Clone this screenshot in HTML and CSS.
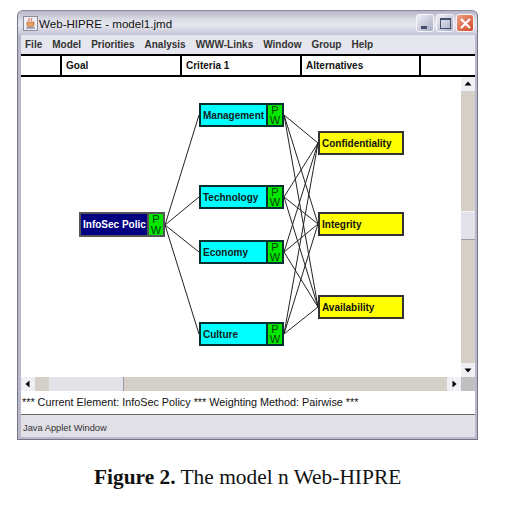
FILE: index.html
```html
<!DOCTYPE html>
<html lang="en">
<head>
  <meta charset="UTF-8">
  <title>Web-HIPRE - model1.jmd</title>
  <link rel="stylesheet" href="styles.css">
</head>
<body>
  <div class="window">
    <div class="titlebar">
      <svg class="appicon" width="15" height="15" viewBox="0 0 15 15">
        <rect x="0.5" y="0.5" width="14" height="14" fill="#eeeef4" stroke="#8a8a9a"/>
        <path d="M6 2c1 1-1 2 0 3M8.5 2c1 1-1 2 0 3" fill="none" stroke="#d05020"/>
        <path d="M4 6h7v3c0 1-1 2-2 2H6c-1 0-2-1-2-2z" fill="#e8a060" stroke="#b06030" stroke-width="0.6"/>
        <path d="M3 12h9" stroke="#5070a0"/>
      </svg>
      <span class="title">Web-HIPRE - model1.jmd</span>
      <div class="winbtns">
        <div class="winbtn"><svg width="17" height="17" viewBox="0 0 17 17"><rect x="4" y="11" width="6" height="3" fill="#44506a"/></svg></div>
        <div class="winbtn"><svg width="17" height="17" viewBox="0 0 17 17"><rect x="3.5" y="3.5" width="10" height="10" fill="none" stroke="#44506a"/><rect x="3" y="3" width="11" height="2" fill="#44506a"/></svg></div>
        <div class="winbtn closebtn"><svg width="17" height="17" viewBox="0 0 17 17"><path d="M4 4l9 9M13 4l-9 9" stroke="#fff" stroke-width="2.2"/></svg></div>
      </div>
    </div>

    <div class="menubar">
      <span>File</span>
      <span>Model</span>
      <span>Priorities</span>
      <span>Analysis</span>
      <span>WWW-Links</span>
      <span>Window</span>
      <span>Group</span>
      <span>Help</span>
    </div>

    <div class="levels">
      <div class="level"></div>
      <div class="level">Goal</div>
      <div class="level">Criteria 1</div>
      <div class="level">Alternatives</div>
      <div class="level"></div>
    </div>

    <div class="middle">
      <div class="canvas">
        <svg class="edges" width="440" height="300" viewBox="0 0 440 300">
          <g stroke="#222" stroke-width="1" fill="none">
            <path d="M144 148L178 38M144 148L178 120M144 148L178 175M144 148L178 257"/>
            <path d="M263 38L297 66M263 38L297 147M263 38L297 230"/>
            <path d="M263 120L297 66M263 120L297 147M263 120L297 230"/>
            <path d="M263 175L297 66M263 175L297 147M263 175L297 230"/>
            <path d="M263 257L297 66M263 257L297 147M263 257L297 230"/>
          </g>
        </svg>

        <div class="node root"><span class="label">InfoSec Polic</span><div class="pw">P<br>W</div></div>
        <div class="node crit mgmt"><span class="label">Management</span><div class="pw">P<br>W</div></div>
        <div class="node crit tech"><span class="label">Technology</span><div class="pw">P<br>W</div></div>
        <div class="node crit econ"><span class="label">Economy</span><div class="pw">P<br>W</div></div>
        <div class="node crit cult"><span class="label">Culture</span><div class="pw">P<br>W</div></div>
        <div class="node alt conf"><span class="label">Confidentiality</span></div>
        <div class="node alt integ"><span class="label">Integrity</span></div>
        <div class="node alt avail"><span class="label">Availability</span></div>
      </div>

      <div class="vscroll">
        <div class="sbtn"><svg width="14" height="14" viewBox="0 0 14 14"><path d="M7 4.5l3.5 4h-7z" fill="#000"/></svg></div>
        <div class="vtrack-top"></div>
        <div class="vthumb"></div>
        <div class="track"></div>
        <div class="sbtn"><svg width="14" height="14" viewBox="0 0 14 14"><path d="M7 9.5l3.5-4h-7z" fill="#000"/></svg></div>
      </div>
    </div>

    <div class="hrow">
      <div class="hscroll">
        <div class="sbtn"><svg width="14" height="14" viewBox="0 0 14 14"><path d="M4.5 7l4-3.5v7z" fill="#000"/></svg></div>
        <div class="htrack-left"></div>
        <div class="hthumb"></div>
        <div class="track"></div>
        <div class="sbtn"><svg width="14" height="14" viewBox="0 0 14 14"><path d="M9.5 7l-4-3.5v7z" fill="#000"/></svg></div>
      </div>
      <div class="corner"></div>
    </div>

    <div class="status">*** Current Element: InfoSec Policy *** Weighting Method: Pairwise ***</div>
    <div class="appletbar">Java Applet Window</div>
  </div>

  <p class="caption"><b>Figure 2.</b> The model n Web-HIPRE</p>
</body>
</html>
```

FILE: styles.css
```css
body {
  margin: 0;
  background: white;
  font-family: "Liberation Sans", Arial, sans-serif;
}

.window {
  margin: 10px 0 0 17px;
  width: 461px;
  height: 430px;
  box-sizing: border-box;
  display: flex;
  flex-direction: column;
  border: 1px solid #76768a;
  border-top-color: #8a8a9c;
  border-radius: 6px 6px 0 0;
  background: #b9b9cb;
  padding: 0 2px 2px 3px;
  overflow: hidden;
}

.titlebar {
  height: 24px;
  flex: none;
  display: flex;
  align-items: center;
  margin: 0 -2px 0 -3px;
  padding: 0 3px 0 5px;
  background: linear-gradient(#b4b4c6, #dcdce6 35%, #e6e6ee 60%, #c4c4d6);
}

.appicon {
  margin-right: 1px;
}

.title {
  font-size: 11.6px;
  color: #111;
  flex: 1;
}

.winbtns {
  display: flex;
  gap: 2px;
}

.winbtn {
  width: 18px;
  height: 18px;
  box-sizing: border-box;
  border: 1px solid #f4f4f8;
  border-radius: 3px;
  background: linear-gradient(135deg, #f0f0f6, #a8acc4);
}

.winbtn svg {
  display: block;
}

.closebtn {
  background: linear-gradient(135deg, #f0a080, #d04828);
}

.menubar {
  height: 19px;
  display: flex;
  align-items: center;
  gap: 10px;
  padding-left: 4px;
  background: #e6e6ee;
  font-size: 10px;
  font-weight: bold;
  color: #333;
  flex: none;
}

.levels {
  height: 23px;
  flex: none;
  box-sizing: border-box;
  display: grid;
  grid-template-columns: 41px 120px 120px 119px 1fr;
  background: white;
  border-top: 2px solid black;
  border-bottom: 2px solid black;
}

.level {
  border-right: 2px solid black;
  font-size: 10px;
  font-weight: bold;
  line-height: 19px;
  padding-left: 4px;
  color: #111;
}

.level:last-child {
  border-right: 0;
}

.middle {
  height: 300px;
  flex: none;
  display: flex;
}

.canvas {
  position: relative;
  width: 440px;
  background: white;
  overflow: hidden;
}

.edges {
  position: absolute;
  left: 0;
  top: 0;
}

.node {
  position: absolute;
  box-sizing: border-box;
  height: 24px;
  border: 2px solid #063030;
  display: flex;
  font-size: 10px;
  font-weight: bold;
  color: #102020;
}

.label {
  flex: 1;
  line-height: 21px;
  padding-left: 2px;
  white-space: nowrap;
}

.pw {
  width: 14px;
  flex: none;
  background: #00e800;
  border-left: 2px solid #063030;
  color: #064006;
  font-size: 11px;
  font-weight: normal;
  line-height: 10px;
  text-align: center;
}

.root {
  left: 58px;
  top: 135px;
  width: 86px;
  height: 25px;
  background: #000080;
  border-color: #555;
  color: white;
}

.root .pw {
  border-left-color: #555;
  line-height: 11px;
}

.crit {
  left: 178px;
  width: 85px;
  background: #00ffff;
}

.mgmt { top: 26px; }
.tech { top: 108px; }
.econ { top: 163px; }
.cult { top: 245px; }

.alt {
  left: 297px;
  width: 86px;
  background: #ffff00;
  border-color: #333;
  color: #111;
}

.conf { top: 54px; }
.integ { top: 135px; }
.avail { top: 218px; }

.vscroll {
  width: 14px;
  display: flex;
  flex-direction: column;
}

.sbtn {
  width: 14px;
  height: 14px;
  flex: none;
  background: #f0f0f4;
}

.sbtn svg {
  display: block;
}

.track {
  flex: 1;
  background: #d4d0c8;
}

.vtrack-top {
  height: 120px;
  background: #d4d0c8;
}

.vthumb {
  height: 29px;
  background: #e2e2e8;
  border-top: 1px solid #f4f4f8;
  border-bottom: 1px solid #9c9ca8;
  box-sizing: border-box;
}

.hrow {
  height: 14px;
  flex: none;
  display: flex;
}

.hscroll {
  width: 440px;
  display: flex;
}

.htrack-left {
  width: 14px;
  background: #d4d0c8;
}

.hthumb {
  width: 75px;
  background: #e2e2e8;
  border-right: 1px solid #9c9ca8;
  box-sizing: border-box;
}

.corner {
  flex: 1;
  background: #c0c0c0;
}

.status {
  height: 24px;
  flex: none;
  box-sizing: border-box;
  background: white;
  border-bottom: 1px solid #666;
  font-size: 10.8px;
  line-height: 22px;
  padding-left: 1px;
  color: #111;
  white-space: nowrap;
}

.appletbar {
  flex: 1;
  min-height: 0;
  background: #e0e0e6;
  font-size: 9.3px;
  line-height: 26px;
  padding-left: 2px;
  color: #333;
  overflow: hidden;
}

.caption {
  margin: 25px 0 0 94px;
  font-family: "Liberation Serif", "Times New Roman", serif;
  font-size: 21.4px;
  color: #111;
  white-space: nowrap;
}
```
